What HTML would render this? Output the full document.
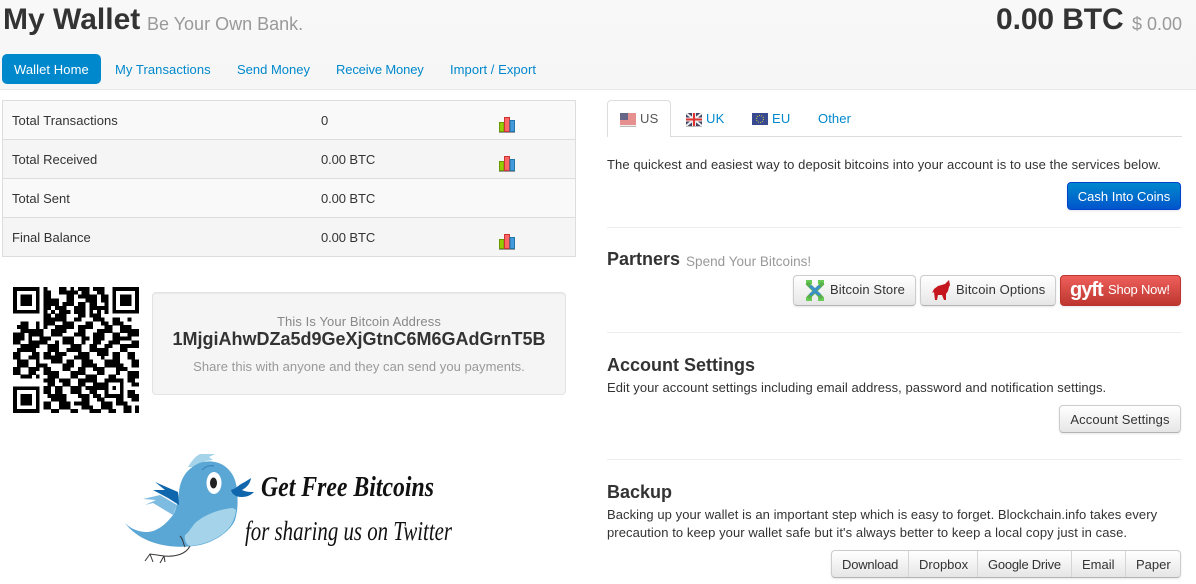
<!DOCTYPE html>
<html><head><meta charset="utf-8"><style>
html,body{margin:0;padding:0;background:#fff}
body{position:relative;width:1196px;height:584px;overflow:hidden;font:13px/18px "Liberation Sans",sans-serif;color:#333}
.t{position:absolute;white-space:nowrap;line-height:18px}
.a{color:#0088cc}.g{color:#999}
.hr{position:absolute;left:607px;width:575px;height:1px;background:#eee}
.b{position:absolute;box-sizing:border-box;height:28px;line-height:27px;text-align:center;border:1px solid #ccc;border-bottom-color:#b3b3b3;border-radius:4px;background:linear-gradient(#fff,#e6e6e6);box-shadow:0 1px 2px rgba(0,0,0,.1);white-space:nowrap}
h3{position:absolute;margin:0;font-size:18px;line-height:20px;font-weight:bold;white-space:nowrap}
svg{position:absolute;overflow:visible}
</style></head><body>
<div style="position:absolute;left:0;top:0;width:1196px;height:89px;background:linear-gradient(#f8f8f8,#f6f6f6);border-bottom:1px solid #e8e8e8"></div>
<div class="t" style="left:3px;top:4px;font-size:30px;line-height:32px;font-weight:bold">My Wallet</div>
<div class="t g" style="left:147px;top:14px;font-size:18px;line-height:20px">Be Your Own Bank.</div>
<div class="t" style="left:996px;top:4px;font-size:30px;line-height:32px;font-weight:bold;letter-spacing:-.1px">0.00 BTC</div>
<div class="t g" style="left:1132px;top:14px;font-size:18px;line-height:20px">$ 0.00</div>
<div style="position:absolute;left:2px;top:54px;width:99px;height:30px;background:#0088cc;border-radius:5px"></div>
<div class="t" style="left:14px;top:61px;color:#fff;letter-spacing:.08px">Wallet Home</div>
<div class="t a" style="left:115px;top:61px;letter-spacing:.07px">My Transactions</div>
<div class="t a" style="left:237px;top:61px">Send Money</div>
<div class="t a" style="left:336px;top:61px;letter-spacing:-.15px">Receive Money</div>
<div class="t a" style="left:450px;top:61px;letter-spacing:.05px">Import / Export</div>

<div style="position:absolute;left:2px;top:100px;width:572px;height:155px;border:1px solid #ddd;background:#f9f9f9"></div>
<div style="position:absolute;left:3px;top:139px;width:572px;height:38px;background:#f5f5f5;border-top:1px solid #ddd;border-bottom:1px solid #ddd"></div>
<div style="position:absolute;left:3px;top:217px;width:572px;height:38px;background:#f5f5f5;border-top:1px solid #ddd"></div>
<div class="t" style="left:12px;top:112px;letter-spacing:.06px">Total Transactions</div><div class="t" style="left:321px;top:112px">0</div>
<div class="t" style="left:12px;top:151px">Total Received</div><div class="t" style="left:321px;top:151px;letter-spacing:-.1px">0.00 BTC</div>
<div class="t" style="left:12px;top:190px">Total Sent</div><div class="t" style="left:321px;top:190px;letter-spacing:-.1px">0.00 BTC</div>
<div class="t" style="left:12px;top:229px">Final Balance</div><div class="t" style="left:321px;top:229px;letter-spacing:-.1px">0.00 BTC</div>
<svg width="0" height="0"><defs><g id="c"><rect x="0.5" y="5.5" width="4.5" height="9" fill="#9c0" stroke="#690"/><rect x="5.5" y="0.5" width="5" height="14" fill="#f66" stroke="#c33"/><rect x="11" y="3.5" width="4.5" height="11" fill="#49d" stroke="#27a"/><rect x="0" y="15" width="16" height="1" fill="#999"/></g></defs></svg>
<svg style="left:499px;top:117px" width="16" height="16"><use href="#c"/></svg>
<svg style="left:499px;top:156px" width="16" height="16"><use href="#c"/></svg>
<svg style="left:499px;top:234px" width="16" height="16"><use href="#c"/></svg>

<svg style="left:13px;top:287px" width="126" height="126" viewBox="0 0 33 33" shape-rendering="crispEdges">
<path fill="#000" fill-rule="evenodd" d="M0 0h7v7h-7zM1 1v5h5v-5zM2 2h3v3h-3zM26 0h7v7h-7zM27 1v5h5v-5zM28 2h3v3h-3zM0 26h7v7h-7zM1 27v5h5v-5zM2 28h3v3h-3z"/>
<path fill="none" stroke="#000" stroke-width="1.05" d="M8 .5h1M12 .5h2M15 .5h1M17 .5h3M21 .5h3
M8 1.5h2M12 1.5h5M18 1.5h2M22 1.5h2
M8 2.5h2M14 2.5h2M17 2.5h5M23 2.5h2
M8 3.5h4M14 3.5h2M19 3.5h3M23 3.5h2
M8 4.5h4M13 4.5h3M17 4.5h2M20 4.5h2M24 4.5h1
M8 5.5h2M11 5.5h3M16 5.5h3M20 5.5h5
M8 6.5h1M10 6.5h1M12 6.5h3M16 6.5h3M20 6.5h1M22 6.5h1M24 6.5h1
M8 7.5h2M11 7.5h3M17 7.5h2M20 7.5h3
M8 8.5h6M16 8.5h2M21 8.5h3M26 8.5h2M30 8.5h1
M2 9.5h2M6 9.5h1M8 9.5h3M13 9.5h3M19 9.5h2M23 9.5h2M26 9.5h3
M1 10.5h3M6 10.5h1M8 10.5h1M11 10.5h5M17 10.5h4M24 10.5h2M28 10.5h3
M2 11.5h6M10 11.5h4M17 11.5h2M22 11.5h4M28 11.5h5
M0 12.5h3M4 12.5h4M10 12.5h3M16 12.5h3M21 12.5h3M26 12.5h2M30 12.5h3
M0 13.5h3M4 13.5h1M7 13.5h3M13 13.5h3M18 13.5h2M21 13.5h3M26 13.5h5
M0 14.5h2M4 14.5h5M11 14.5h1M13 14.5h3M18 14.5h1M21 14.5h2M25 14.5h3M31 14.5h2
M2 15.5h5M9 15.5h3M15 15.5h3M20 15.5h2M24 15.5h2M28 15.5h5
M1 16.5h5M9 16.5h3M14 16.5h4M20 16.5h5M28 16.5h2
M0 17.5h2M5 17.5h2M8 17.5h2M11 17.5h3M17 17.5h3M22 17.5h3M26 17.5h2M30 17.5h2
M0 18.5h2M4 18.5h3M8 18.5h5M16 18.5h4M23 18.5h1M26 18.5h2M30 18.5h2
M1 19.5h3M6 19.5h1M10 19.5h3M14 19.5h2M18 19.5h3M24 19.5h4M31 19.5h2
M1 20.5h3M6 20.5h3M13 20.5h3M18 20.5h4M24 20.5h5M31 20.5h2
M0 21.5h2M4 21.5h3M8 21.5h2M13 21.5h2M17 21.5h2M21 21.5h3M27 21.5h3
M0 22.5h2M4 22.5h2M8 22.5h4M15 22.5h4M22 22.5h2M27 22.5h1M30 22.5h3
M2 23.5h3M6 23.5h1M9 23.5h3M15 23.5h2M19 23.5h3M25 23.5h2M30 23.5h3
M8 24.5h3M12 24.5h3M17 24.5h5M24 24.5h5M30 24.5h2
M9 25.5h2M13 25.5h2M17 25.5h2M21 25.5h4M28 25.5h1M31 25.5h2
M8 26.5h2M11 26.5h2M15 26.5h3M19 26.5h6M26 26.5h1M28 26.5h1
M8 27.5h2M11 27.5h2M15 27.5h3M20 27.5h2M24 27.5h1M28 27.5h1M30 27.5h2
M9 28.5h5M17 28.5h3M21 28.5h2M24 28.5h5M30 28.5h3
M10 29.5h4M18 29.5h2M22 29.5h2M27 29.5h2M31 29.5h2
M8 30.5h2M12 30.5h3M16 30.5h4M23 30.5h3M27 30.5h3
M8 31.5h2M12 31.5h3M18 31.5h3M23 31.5h3M29 31.5h2M32 31.5h1
M10 32.5h2M15 32.5h2M20 32.5h3M25 32.5h2M29 32.5h2M32 32.5h1"/>
</svg>

<div style="position:absolute;box-sizing:border-box;left:152px;top:292px;width:414px;height:103px;background:#f5f5f5;border:1px solid #e3e3e3;border-radius:4px;box-shadow:inset 0 1px 1px rgba(0,0,0,.05)"></div>
<div class="t" style="left:152px;width:414px;text-align:center;top:313px;color:#888;letter-spacing:.1px">This Is Your Bitcoin Address</div>
<div class="t" style="left:152px;width:414px;text-align:center;top:329px;font-size:18px;line-height:20px;font-weight:bold">1MjgiAhwDZa5d9GeXjGtnC6M6GAdGrnT5B</div>
<div class="t g" style="left:152px;width:414px;text-align:center;top:358px;letter-spacing:.04px">Share this with anyone and they can send you payments.</div>

<svg style="left:110px;top:440px" width="360" height="144" viewBox="0 0 360 144">
<path fill="#a5d4ea" d="M78 27C82 20 86 16 90 14L105 14 99 17 103 20 95 21 88 27Z"/>
<path fill="#5aa7d6" d="M15 83C22 90 30 92 38 92 48 91 56 84 63 75 67 68 68 60 69 52 70 42 74 32 84 26 92 20 104 20 113 25 121 30 126 38 127 50 128 60 128 70 125 80 120 92 104 102 90 105 70 109 34 108 15 83Z"/>
<path fill="#a5d4ea" d="M75 95C80 92 83 83 89 80 97 74 110 69 123 68L126 70C125 80 120 90 108 97 100 102 90 105 80 106 76 105 74 99 75 95Z"/>
<path fill="#0f66ac" d="M45 42L68 52 69 65 58 58 43 50 55 50Z"/>
<path fill="#7dbbe0" d="M33 59L50 55 67 65 63 75 43 63 35 65 46 60Z"/>
<path fill="#0f66ac" d="M121 50C125 49 128 46 131 44 135 42 138 40 141 38 140 44 137 47 132 50 136 52 140 52 144 52 140 56 136 57 131 57 127 57 122 55 121 50Z"/>
<path fill="none" stroke="#3a85c0" stroke-width="1.2" d="M92 30C96 26 100 25 104 26"/>
<ellipse cx="104" cy="43" rx="7.5" ry="11" fill="#fff"/>
<ellipse cx="103.5" cy="43" rx="3.5" ry="5.5" fill="#222"/>
<path fill="none" stroke="#333" stroke-width="1" d="M70 96C74 100 73 104 75 107M80 106C76 114 66 117 54 116L40 114 35 121M40 114L43 122M54 116L50 123M54 116L55 122"/>
<text x="151" y="56" font-family="Liberation Serif,serif" font-style="italic" font-weight="bold" font-size="29" textLength="173" lengthAdjust="spacingAndGlyphs" fill="#111">Get Free Bitcoins</text>
<text x="135" y="100" font-family="Liberation Serif,serif" font-style="italic" font-size="27" textLength="207" lengthAdjust="spacingAndGlyphs" fill="#111">for sharing us on Twitter</text>
</svg>

<div style="position:absolute;left:607px;top:136px;width:575px;height:1px;background:#ddd"></div>
<div style="position:absolute;box-sizing:border-box;left:607px;top:100px;width:64px;height:37px;background:#fff;border:1px solid #ddd;border-bottom:0;border-radius:4px 4px 0 0"></div>
<svg style="left:620px;top:113px" width="16" height="14"><rect width="16" height="13" fill="#eee"/><path d="M0 1h16M0 3h16M0 5h16M0 7h16M0 9h16M0 11h16" stroke="#d33" stroke-width="1"/><rect width="8" height="7" fill="#668"/><rect y="13" width="16" height="1" fill="#bbb"/></svg>
<div class="t" style="left:640px;top:110px;color:#555;letter-spacing:.2px">US</div>
<svg style="left:686px;top:113px" width="16" height="14"><rect width="16" height="13" fill="#446"/><path d="M0 0L16 13M16 0L0 13" stroke="#eee" stroke-width="2"/><path d="M8 0v13M0 6.5h16" stroke="#eee" stroke-width="4"/><path d="M8 0v13M0 6.5h16" stroke="#d33" stroke-width="2"/><rect y="13" width="16" height="1" fill="#bbb"/></svg>
<div class="t a" style="left:706px;top:110px;letter-spacing:.2px">UK</div>
<svg style="left:752px;top:113px" width="16" height="12"><rect width="16" height="12" fill="#3a4a90"/><circle cx="8" cy="6" r="3.5" fill="none" stroke="#cc3" stroke-dasharray="1 1.2"/></svg>
<div class="t a" style="left:772px;top:110px;letter-spacing:.2px">EU</div>
<div class="t a" style="left:818px;top:110px;letter-spacing:.1px">Other</div>
<div class="t" style="left:607px;top:156px;letter-spacing:.08px">The quickest and easiest way to deposit bitcoins into your account is to use the services below.</div>
<div class="b" style="left:1067px;top:182px;width:114px;color:#fff;background:linear-gradient(#0088cc,#0055cc);border-color:#04c">Cash Into Coins</div>
<div class="hr" style="top:227px"></div>
<h3 style="left:607px;top:249px">Partners</h3><div class="t g" style="left:686px;top:253px;font-size:13.5px;letter-spacing:.03px">Spend Your Bitcoins!</div>
<div class="b" style="left:793px;top:275px;width:123px;height:31px;line-height:28px;padding-left:36px;text-align:left;letter-spacing:.1px">Bitcoin Store</div>
<svg style="left:803px;top:279px" width="24" height="23"><path d="M3 1h6v4h-6zM15 1h6v4h-6zM3 18h6v4h-6zM15 18h6v4h-6z" fill="#6c5"/><path d="M4 4L19 19M20 4L5 19" stroke="#5ab04a" stroke-width="4"/><path d="M7 7L12 11 17 7M7 16L12 12 17 16" fill="none" stroke="#3a90c8" stroke-width="3"/></svg>
<div class="b" style="left:920px;top:275px;width:136px;height:31px;line-height:28px;padding-left:35px;text-align:left;letter-spacing:.13px">Bitcoin Options</div>
<svg style="left:931px;top:279px" width="20" height="22"><path fill="#c4161c" d="M18 1L14 5 7 7 3 10 1 14 3 13 4 21 6 21 7 16 11 16 13 21 15 21 15 15 17 12 18 8 19 6Z"/></svg>
<div class="b" style="left:1060px;top:275px;width:121px;height:31px;line-height:28px;color:#fff;background:linear-gradient(#ee5f5b,#bd362f);border-color:#bd362f;padding-left:47px;text-align:left;letter-spacing:-.2px">Shop Now!</div>
<div class="t" style="left:1070px;top:279px;color:#fff;font-size:20px;line-height:22px;font-weight:bold;letter-spacing:-1px">gyft</div>
<div class="hr" style="top:332px"></div>
<h3 style="left:607px;top:355px">Account Settings</h3>
<div class="t" style="left:607px;top:379px;letter-spacing:.057px">Edit your account settings including email address, password and notification settings.</div>
<div class="b" style="left:1059px;top:405px;width:122px;letter-spacing:.1px">Account Settings</div>
<div class="hr" style="top:459px"></div>
<h3 style="left:607px;top:482px">Backup</h3>
<div class="t" style="left:607px;top:506px;letter-spacing:.063px">Backing up your wallet is an important step which is easy to forget. Blockchain.info takes every</div>
<div class="t" style="left:607px;top:524px;letter-spacing:.08px">precaution to keep your wallet safe but it's always better to keep a local copy just in case.</div>
<div class="b" style="left:831px;top:550px;width:350px"></div>
<div class="t" style="left:842px;top:556px;letter-spacing:-.2px">Download</div>
<div class="t" style="left:919px;top:556px">Dropbox</div>
<div class="t" style="left:988px;top:556px;letter-spacing:-.25px">Google Drive</div>
<div class="t" style="left:1082px;top:556px">Email</div>
<div class="t" style="left:1136px;top:556px">Paper</div>
<div style="position:absolute;left:908px;top:551px;width:1px;height:26px;background:#d5d5d5"></div>
<div style="position:absolute;left:977px;top:551px;width:1px;height:26px;background:#d5d5d5"></div>
<div style="position:absolute;left:1071px;top:551px;width:1px;height:26px;background:#d5d5d5"></div>
<div style="position:absolute;left:1125px;top:551px;width:1px;height:26px;background:#d5d5d5"></div>
</body></html>
